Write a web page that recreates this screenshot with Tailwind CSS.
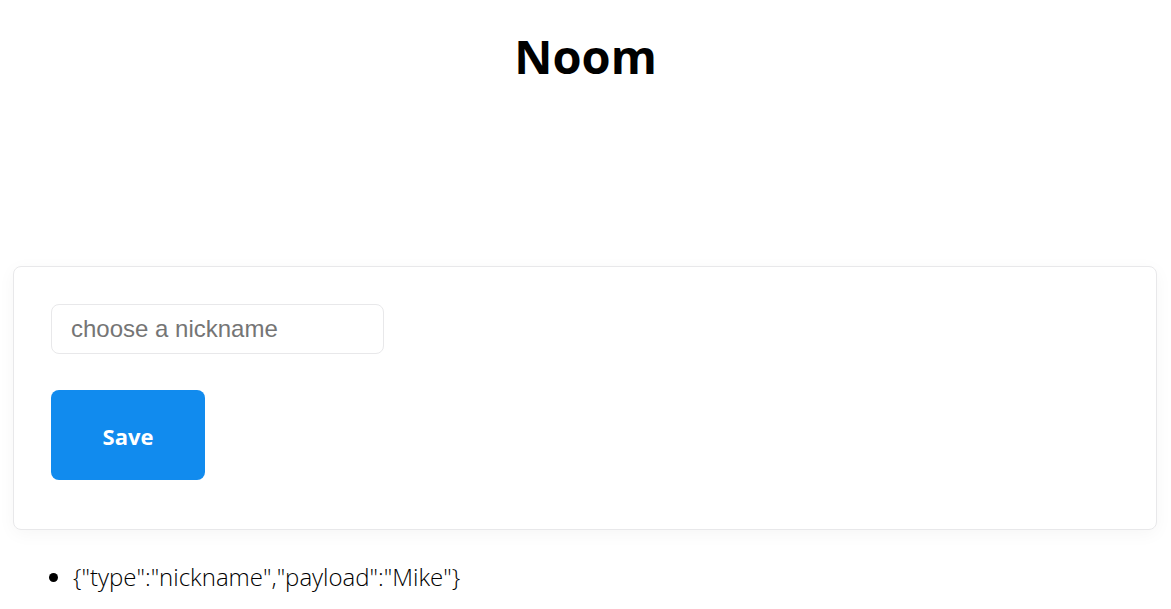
<!DOCTYPE html>
<html lang="en">
<head>
<meta charset="utf-8">
<title>Noom</title>
<script src="https://cdn.jsdelivr.net/npm/@tailwindcss/browser@4"></script>
</head>
<body class="bg-white px-[13px] pt-6 font-['Open_Sans',sans-serif] text-black">
<header class="pb-[178px]">
<h1 class="text-center text-[47px] leading-[64px] font-bold">Noom</h1>
</header>
<main>
<form class="mr-px rounded-lg border border-[#e8e8ea] px-[37px] pt-[37px] pb-[49px] shadow-[0_4px_18px_rgba(0,0,0,0.04)]">
<input type="text" aria-label="Nickname" placeholder="choose a nickname" class="block h-[50px] w-[333px] rounded-lg border border-[#e8e8ea] px-[19px] font-['Liberation_Sans',sans-serif] text-2xl placeholder:text-[#757575]">
<button type="button" class="mt-9 block h-[90px] w-[154px] rounded-lg bg-[#118bee] pt-[2px] text-[22px] font-bold text-white">Save</button>
</form>
<ul class="mt-[31px] list-disc pl-[60px] text-2xl leading-8 font-light">
<li>{"type":"nickname","payload":"Mike"}</li>
</ul>
</main>
</body>
</html>
